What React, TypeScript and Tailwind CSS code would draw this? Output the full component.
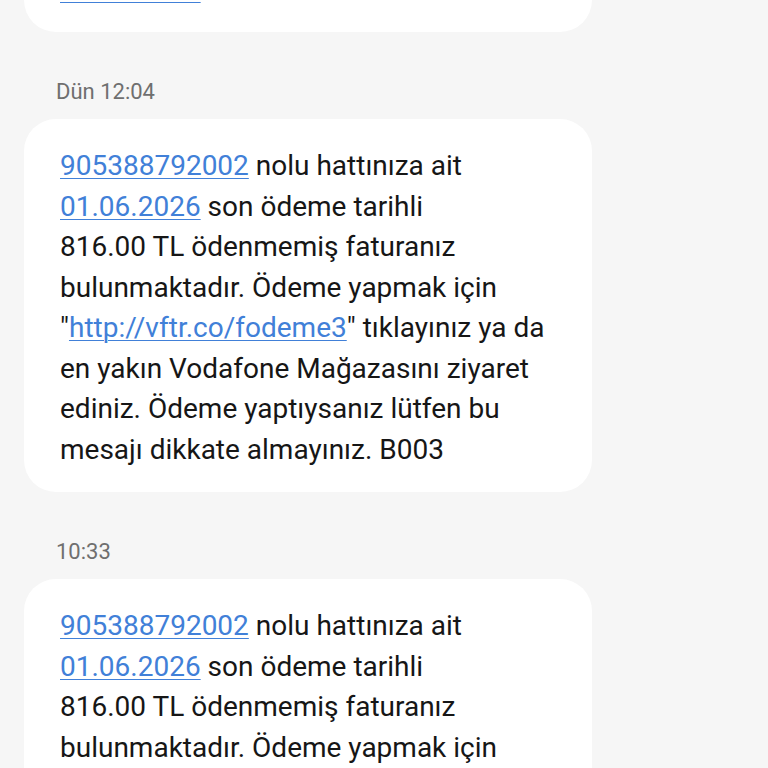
const font = { fontFamily: "Roboto, 'Noto Sans', sans-serif" }

function Link({ children }: { children: React.ReactNode }) {
  return <span className="text-[#4180d8] underline decoration-1 underline-offset-[3px]">{children}</span>
}

function MessageBody() {
  return (
    <>
      <div><Link>905388792002</Link> nolu hattınıza ait</div>
      <div><Link>01.06.2026</Link> son ödeme tarihli</div>
      <div>816.00 TL ödenmemiş faturanız</div>
      <div>bulunmaktadır. Ödeme yapmak için</div>
      <div>"<Link>http://vftr.co/fodeme3</Link>" tıklayınız ya da</div>
      <div>en yakın Vodafone Mağazasını ziyaret</div>
      <div>ediniz. Ödeme yaptıysanız lütfen bu</div>
      <div>mesajı dikkate almayınız. B003</div>
    </>
  )
}

function Bubble({ children }: { children: React.ReactNode }) {
  return (
    <div className="w-[568px] bg-white rounded-[32px] pl-[36px] pr-6 pt-[27px] pb-[22px] text-[28px] leading-[40.5px] text-[#161616] whitespace-nowrap">
      {children}
    </div>
  )
}

function TimeLabel({ text }: { text: string }) {
  return (
    <div className="pl-[32px] pt-[47px] pb-[14px] text-[22px] leading-[26px] text-[#6f6f6f]">{text}</div>
  )
}

export default function App() {
  return (
    <div className="h-[768px] w-[768px] overflow-hidden bg-[#f6f6f6]" style={font}>
      {/* list is scrolled: only the end of the previous bubble shows */}
      <div className="-mt-[57.5px] pl-[24px] flex flex-col">
        <Bubble>
          <div><Link>01.06.2026</Link></div>
        </Bubble>
        <TimeLabel text="Dün 12:04" />
        <Bubble>
          <MessageBody />
        </Bubble>
        <TimeLabel text="10:33" />
        <Bubble>
          <MessageBody />
        </Bubble>
      </div>
    </div>
  )
}
